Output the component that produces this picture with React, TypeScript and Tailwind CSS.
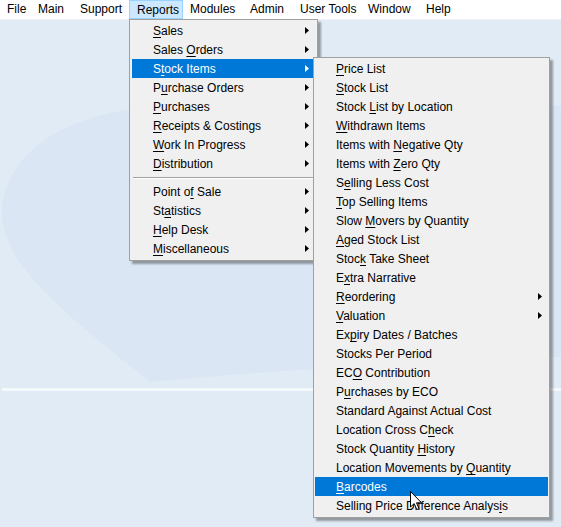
import React from "react"

// '&' marks the mnemonic letter, like a Win32 menu resource
const topMenus = [
  { label: "File", w: "w-[31px]" },
  { label: "Main", w: "w-[42px]" },
  { label: "Support", w: "w-[56px]" },
  { label: "Reports", w: "w-[54px]", open: true },
  { label: "Modules", w: "w-[60px]" },
  { label: "Admin", w: "w-[50px]" },
  { label: "User Tools", w: "w-[68px]" },
  { label: "Window", w: "w-[58px]" },
  { label: "Help", w: "w-[40px]" },
]

type Item = { label: string; sub?: boolean; active?: boolean } | "sep"

const reports: Item[] = [
  { label: "&Sales", sub: true },
  { label: "Sales &Orders", sub: true },
  { label: "S&tock Items", sub: true, active: true },
  { label: "P&urchase Orders", sub: true },
  { label: "&Purchases", sub: true },
  { label: "&Receipts & Costings", sub: true },
  { label: "&Work In Progress", sub: true },
  { label: "&Distribution", sub: true },
  "sep",
  { label: "Point o&f Sale", sub: true },
  { label: "St&atistics", sub: true },
  { label: "&Help Desk", sub: true },
  { label: "&Miscellaneous", sub: true },
]

const stockItems: Item[] = [
  { label: "&Price List" },
  { label: "&Stock List" },
  { label: "Stock &List by Location" },
  { label: "&Withdrawn Items" },
  { label: "Items with &Negative Qty" },
  { label: "Items with &Zero Qty" },
  { label: "S&elling Less Cost" },
  { label: "&Top Selling Items" },
  { label: "Slow &Movers by Quantity" },
  { label: "&Aged Stock List" },
  { label: "Stoc&k Take Sheet" },
  { label: "E&xtra Narrative" },
  { label: "&Reordering", sub: true },
  { label: "&Valuation", sub: true },
  { label: "Ex&piry Dates / Batches" },
  { label: "Stocks Per Period" },
  { label: "EC&O Contribution" },
  { label: "P&urchases by ECO" },
  { label: "Standard Against Actual Cost" },
  { label: "Location Cross C&heck" },
  { label: "Stock Quantity &History" },
  { label: "Location Movements by &Quantity" },
  { label: "&Barcodes", active: true },
  { label: "Selling Price Difference Analys&is" },
]

function Mnemonic({ text }: { text: string }) {
  // only the first '&' followed by a letter is the accelerator
  const i = text.search(/&(?! )/)
  if (i < 0) return <>{text}</>
  return (
    <>
      {text.slice(0, i)}
      <span className="underline underline-offset-[2px]">{text[i + 1]}</span>
      {text.slice(i + 2)}
    </>
  )
}

function Arrow({ white }: { white?: boolean }) {
  return (
    <svg width="4" height="7" viewBox="0 0 4 7" className="block">
      <path d="M0 0 L4 3.5 L0 7 Z" fill={white ? "#ffffff" : "#000000"} />
    </svg>
  )
}

function MenuRows({ items }: { items: Item[] }) {
  return (
    <>
      {items.map((it, idx) =>
        it === "sep" ? (
          <div key={idx} className="h-[9px] pt-[4px] px-[1px]">
            <div className="h-px bg-[#a0a0a0]" />
            <div className="h-px bg-white" />
          </div>
        ) : (
          <div
            key={idx}
            className={`flex items-center h-[19px] pl-[21px] pr-[6px] whitespace-nowrap ${
              it.active ? "bg-[#0078d7] text-white" : ""
            }`}
          >
            <span className="relative top-[1px] flex-1 leading-[19px]">
              <Mnemonic text={it.label} />
            </span>
            {it.sub && <Arrow white={it.active} />}
          </div>
        )
      )}
    </>
  )
}

export default function App() {
  return (
    <div className="relative w-full h-[527px] overflow-hidden flex flex-col bg-[#e1ebf5] text-[12px] text-black font-['Liberation_Sans',Arial,sans-serif]">
      {/* menu bar */}
      <div className="flex h-[20px] bg-white border-b border-[#eef3f9]">
        {topMenus.map((m) => (
          <div
            key={m.label}
            className={`${m.w} h-[19px] pl-[7px] leading-[19px] whitespace-nowrap ${
              m.open ? "bg-[#cce8ff] border border-[#99d1ff] pl-[6px] leading-[17px]" : ""
            }`}
          >
            {m.label}
          </div>
        ))}
      </div>

      {/* desktop watermark */}
      <svg width="561" height="507" viewBox="0 0 561 507" className="block">
        <path
          d="M561 86 L150 88 C60 92 0 140 2 195 C4 245 60 290 150 362 C300 348 450 340 561 337 Z"
          fill="#dae6f3"
        />
        <rect x="2" y="368" width="559" height="3" fill="#f6f9fc" />
      </svg>

      {/* Reports dropdown */}
      <div className="absolute left-[129px] top-[19px] w-[189px] pt-[1px] pb-[2px] px-[2px] bg-[#f0f0f0] border border-[#a0a0a0] shadow-[3px_3px_2px_rgba(0,0,0,0.35)]">
        <MenuRows items={reports} />
      </div>

      {/* Stock Items submenu */}
      <div className="absolute left-[313px] top-[57px] w-[237px] pt-[1px] pb-[2px] px-[1px] bg-[#f0f0f0] border border-[#a0a0a0] shadow-[3px_3px_2px_rgba(0,0,0,0.35)]">
        <MenuRows items={stockItems} />
      </div>

      {/* mouse pointer */}
      <svg
        width="13"
        height="20"
        viewBox="0 0 13 20"
        className="absolute left-[410px] top-[491px]"
      >
        <path
          d="M0.5 0.5 L0.5 16 L4.2 12.6 L6.8 18.6 L9 17.6 L6.5 11.8 L11.5 11.8 Z"
          fill="#ffffff"
          stroke="#000000"
          strokeWidth="1"
          strokeLinejoin="miter"
        />
      </svg>
    </div>
  )
}
